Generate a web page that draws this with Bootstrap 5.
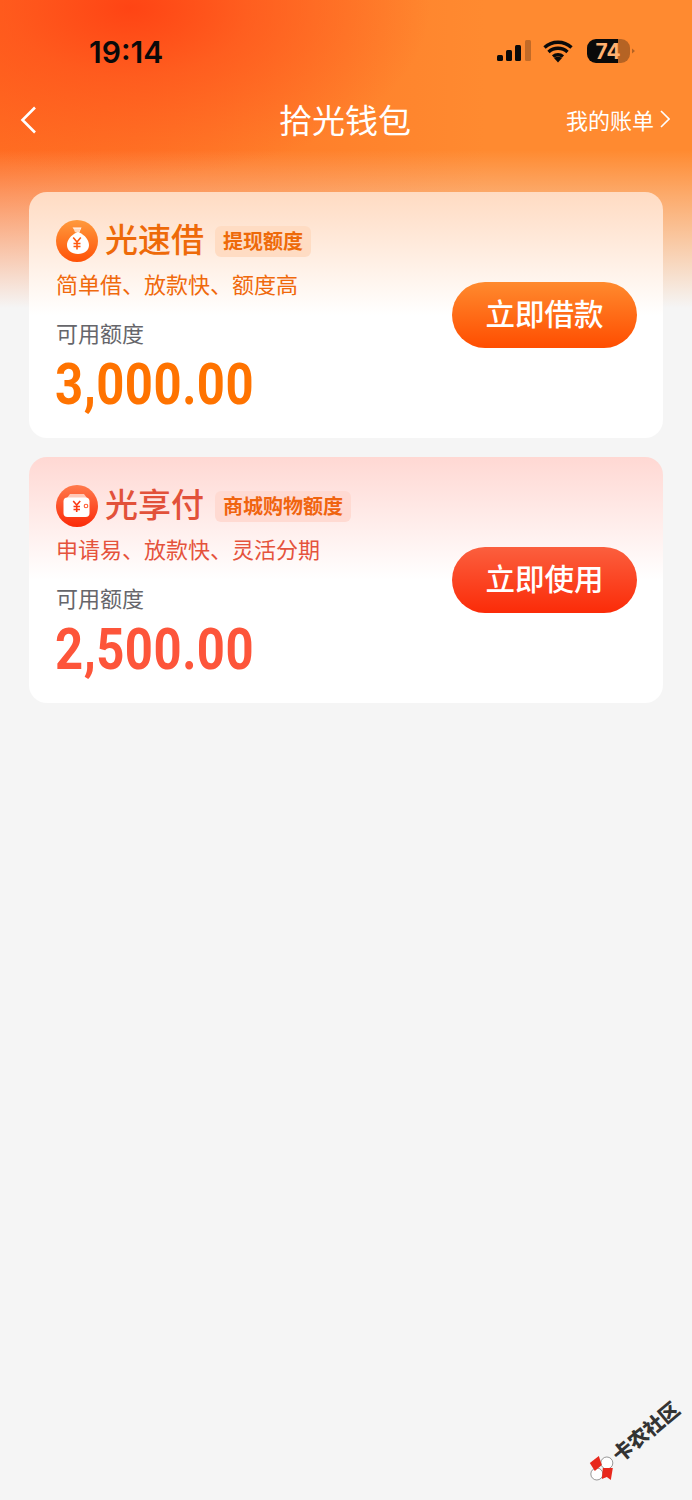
<!DOCTYPE html>
<html lang="zh-CN">
<head>
  <meta charset="UTF-8" />
  <meta name="viewport" content="width=device-width, initial-scale=1.0" />
  <title>拾光钱包</title>
  <link href="https://cdn.jsdelivr.net/npm/bootstrap@5.3.3/dist/css/bootstrap.min.css" rel="stylesheet" />
  <style>
    body {
      font-family: "Noto Sans CJK SC", "Liberation Sans", sans-serif;
      background-color: #f5f5f5;
    }
    .wallet-page {
      position: relative;
      height: 1500px;
      overflow: hidden;
      background:
        linear-gradient(to bottom, rgba(245,245,245,0) 150px, rgba(245,245,245,.3) 195px, rgba(245,245,245,1) 308px),
        radial-gradient(ellipse 300px 170px at 130px 8px, #ff4414 0%, rgba(255,75,25,.6) 40%, rgba(255,110,35,0) 100%),
        linear-gradient(to right, #ff6e22 0%, #ff8a30 70%, #ff8a30 100%);
    }
    .status-row {
      height: 96px;
      padding: 8px 56px 0 89px;
    }
    .clock-text {
      font-family: Inter, "Liberation Sans", sans-serif;
      font-size: 30px;
      font-weight: 600;
      color: #0a0a0a;
    }
    .nav-row {
      display: grid;
      grid-template-columns: 1fr auto 1fr;
      height: 48px;
      padding: 0 22px 0 20px;
      color: #fff;
    }
    .nav-title {
      font-size: 33px;
      font-weight: 400;
      line-height: 46px;
      height: 48px;
    }
    .bill-link {
      font-size: 22px;
      line-height: 28px;
      color: #fff;
      text-decoration: none;
      margin-top: -2px;
    }
    .bill-link span { margin-right: -2px; }
    .card-list {
      padding: 48px 29px 0;
      gap: 19px;
    }
    .quota-card {
      height: 246px;
      padding: 0 26px 0 27px;
      border: 0;
      border-radius: 18px;
    }
    .quota-orange {
      background: linear-gradient(to bottom, #ffdbc2 0%, #fff 50%);
      color: #f0690c;
    }
    .quota-red {
      background: linear-gradient(to bottom, #ffd8d3 0%, #fff 50%);
      color: #e5533c;
    }
    .head-line {
      height: 42px;
      margin-top: 28px;
    }
    .product-name {
      font-size: 33px;
      font-weight: 500;
      line-height: 36px;
      height: 42px;
      margin: 0 11px 0 7px;
    }
    .quota-orange .product-name { color: #ee6a09; }
    .quota-red .product-name { color: #e2513a; }
    .quota-tag {
      font-size: 20px;
      font-weight: 700;
      line-height: 29px;
      height: 31px;
      padding: 0 8px;
      border-radius: 6px;
      color: #ee6a09;
    }
    .quota-orange .quota-tag { background: #ffdcc3; }
    .quota-red .quota-tag { background: #ffdad2; color: #f0640f; }
    .slogan {
      font-size: 22px;
      line-height: 32px;
      margin-top: 5px;
    }
    .limit-label {
      font-size: 22px;
      line-height: 32px;
      color: #66666b;
      margin-top: 17px;
    }
    .limit-amount {
      font-family: Roboto, "Liberation Sans", sans-serif;
      font-size: 57px;
      font-weight: 700;
      line-height: 60px;
      letter-spacing: .6px;
      margin: 7px 0 0 -1px;
      transform: scaleX(.86);
      transform-origin: left center;
    }
    .quota-orange .limit-amount { color: #ff7300; }
    .quota-red .limit-amount { color: #fd553a; }
    .action-btn {
      width: 185px;
      height: 66px;
      border: 0;
      border-radius: 33px;
      color: #fff;
      font-size: 29.500px;
      font-weight: 500;
      line-height: 60px;
      padding: 0 0 6px;
    }
    .action-orange { background: linear-gradient(to bottom, #ff8a2e, #ff4d00); }
    .action-red { background: linear-gradient(to bottom, #fb5f3e, #fb2b08); }
    .site-mark {
      position: absolute;
      right: 3px;
      bottom: 46px;
      transform: rotate(-40deg);
      font-size: 20px;
      font-weight: 900;
      color: #333;
      line-height: 26px;
      white-space: nowrap;
    }
    .site-mark svg { transform: rotate(40deg); }
  </style>
</head>
<body>
  <div class="wallet-page">
    <!-- status bar -->
    <div class="status-row d-flex justify-content-between align-items-center">
      <span class="clock-text">19:14</span>
      <svg width="140" height="26" viewBox="0 0 140 26">
        <rect x="1" y="16" width="6" height="6" rx="1.500" fill="#0a0a0a"/>
        <rect x="10" y="11" width="6" height="11" rx="1.500" fill="#0a0a0a"/>
        <rect x="19" y="6" width="6" height="16" rx="1.500" fill="#0a0a0a"/>
        <rect x="29" y="1" width="6" height="21" rx="1.500" fill="#0a0a0a" fill-opacity=".25"/>
        <path d="M48.500 8.500a20 20 0 0 1 27 0M52.500 13a14 14 0 0 1 19 0M57 17.500a8 8 0 0 1 10 0" fill="none" stroke="#0a0a0a" stroke-width="3.400"/>
        <path d="M62 23.500l-4-4.500a6 6 0 0 1 8 0z" fill="#0a0a0a"/>
        <path d="M100 0h22v24h-22a9 9 0 0 1-9-9V9a9 9 0 0 1 9-9z" fill="#0a0a0a"/>
        <path d="M122 0h3a9 9 0 0 1 9 9v6a9 9 0 0 1-9 9h-3z" fill="#0a0a0a" fill-opacity=".3"/>
        <path d="M136 9.500l3 2.500-3 2.500z" fill="#0a0a0a" fill-opacity=".3"/>
        <text x="112" y="19.500" text-anchor="middle" font-family="Inter, Liberation Sans, sans-serif" font-size="21" font-weight="700" fill="#ffb070">74</text>
      </svg>
    </div>

    <!-- nav -->
    <div class="nav-row align-items-center">
      <svg width="17" height="28" viewBox="0 0 17 28">
        <path d="M15 1.500L2.500 14 15 26.500" fill="none" stroke="#fff" stroke-width="2.600"/>
      </svg>
      <div class="nav-title">拾光钱包</div>
      <a href="#" class="bill-link d-flex justify-content-end align-items-center gap-2">
        <span>我的账单</span>
        <svg width="10" height="18" viewBox="0 0 10 18">
          <path d="M1 1l8 8-8 8" fill="none" stroke="#fff" stroke-width="1.600"/>
        </svg>
      </a>
    </div>

    <div class="card-list d-flex flex-column">
      <!-- 光速借 -->
      <div class="card quota-card quota-orange flex-row justify-content-between align-items-center">
        <div class="align-self-start">
          <div class="head-line d-flex align-items-center">
            <svg width="42" height="42" viewBox="0 0 42 42">
              <defs>
                <linearGradient id="bagBg" x1="0" y1="0" x2="0" y2="1">
                  <stop offset="0" stop-color="#ff9a3c"/>
                  <stop offset="1" stop-color="#ff5208"/>
                </linearGradient>
              </defs>
              <circle cx="21" cy="21" r="21" fill="url(#bagBg)"/>
              <path d="M16.500 7.500h9l-2.300 5c6 2.500 9.800 8 9.800 12.500 0 5.500-4.500 9-11 9s-11-3.500-11-9c0-4.500 3.800-10 9.800-12.500z" fill="#fff"/>
              <path d="M17.500 8.500h7l-1.500 3.800h-4z" fill="#ffd9bd"/>
              <path d="M17.200 17.500l3.800 4.500 3.800-4.500M21 22v7.500M17.500 23.500h7M17.500 26.500h7" fill="none" stroke="#ff5a10" stroke-width="1.600"/>
            </svg>
            <span class="product-name">光速借</span>
            <span class="quota-tag">提现额度</span>
          </div>
          <div class="slogan">简单借、放款快、额度高</div>
          <div class="limit-label">可用额度</div>
          <div class="limit-amount">3,000.00</div>
        </div>
        <button type="button" class="btn action-btn action-orange">立即借款</button>
      </div>

      <!-- 光享付 -->
      <div class="card quota-card quota-red flex-row justify-content-between align-items-center">
        <div class="align-self-start">
          <div class="head-line d-flex align-items-center">
            <svg width="42" height="42" viewBox="0 0 42 42">
              <defs>
                <linearGradient id="walletBg" x1="0" y1="0" x2="0" y2="1">
                  <stop offset="0" stop-color="#ff7a4c"/>
                  <stop offset="1" stop-color="#fb2a08"/>
                </linearGradient>
              </defs>
              <circle cx="21" cy="21" r="21" fill="url(#walletBg)"/>
              <path d="M11 13l3-4h14l3 4z" fill="#ffc9b8"/>
              <rect x="7.500" y="12.500" width="26" height="19.500" rx="4" fill="#fff"/>
              <circle cx="30" cy="21" r="1.800" fill="none" stroke="#ff5a30" stroke-width="1.100"/>
              <path d="M17.200 16l3.500 4 3.500-4M20.700 20v7M17.500 21.500h6.500M17.500 24.500h6.500" fill="none" stroke="#fb3a14" stroke-width="1.600"/>
            </svg>
            <span class="product-name">光享付</span>
            <span class="quota-tag">商城购物额度</span>
          </div>
          <div class="slogan">申请易、放款快、灵活分期</div>
          <div class="limit-label">可用额度</div>
          <div class="limit-amount">2,500.00</div>
        </div>
        <button type="button" class="btn action-btn action-red">立即使用</button>
      </div>
    </div>

    <!-- watermark -->
    <div class="site-mark d-flex align-items-center gap-1">
      <svg width="26" height="26" viewBox="0 0 26 26">
        <circle cx="18" cy="8" r="6" fill="#fff" stroke="#555" stroke-width=".6"/>
        <circle cx="8" cy="19" r="6" fill="#fff" stroke="#555" stroke-width=".6"/>
        <path d="M1 8L10 1l3 9-7 6z" fill="#e8281c"/>
        <path d="M14 13l10 0-2 12-4-3-5 2z" fill="#e8281c"/>
      </svg>
      卡农社区
    </div>
  </div>
  <script src="https://cdn.jsdelivr.net/npm/bootstrap@5.3.3/dist/js/bootstrap.bundle.min.js"></script>
</body>
</html>
